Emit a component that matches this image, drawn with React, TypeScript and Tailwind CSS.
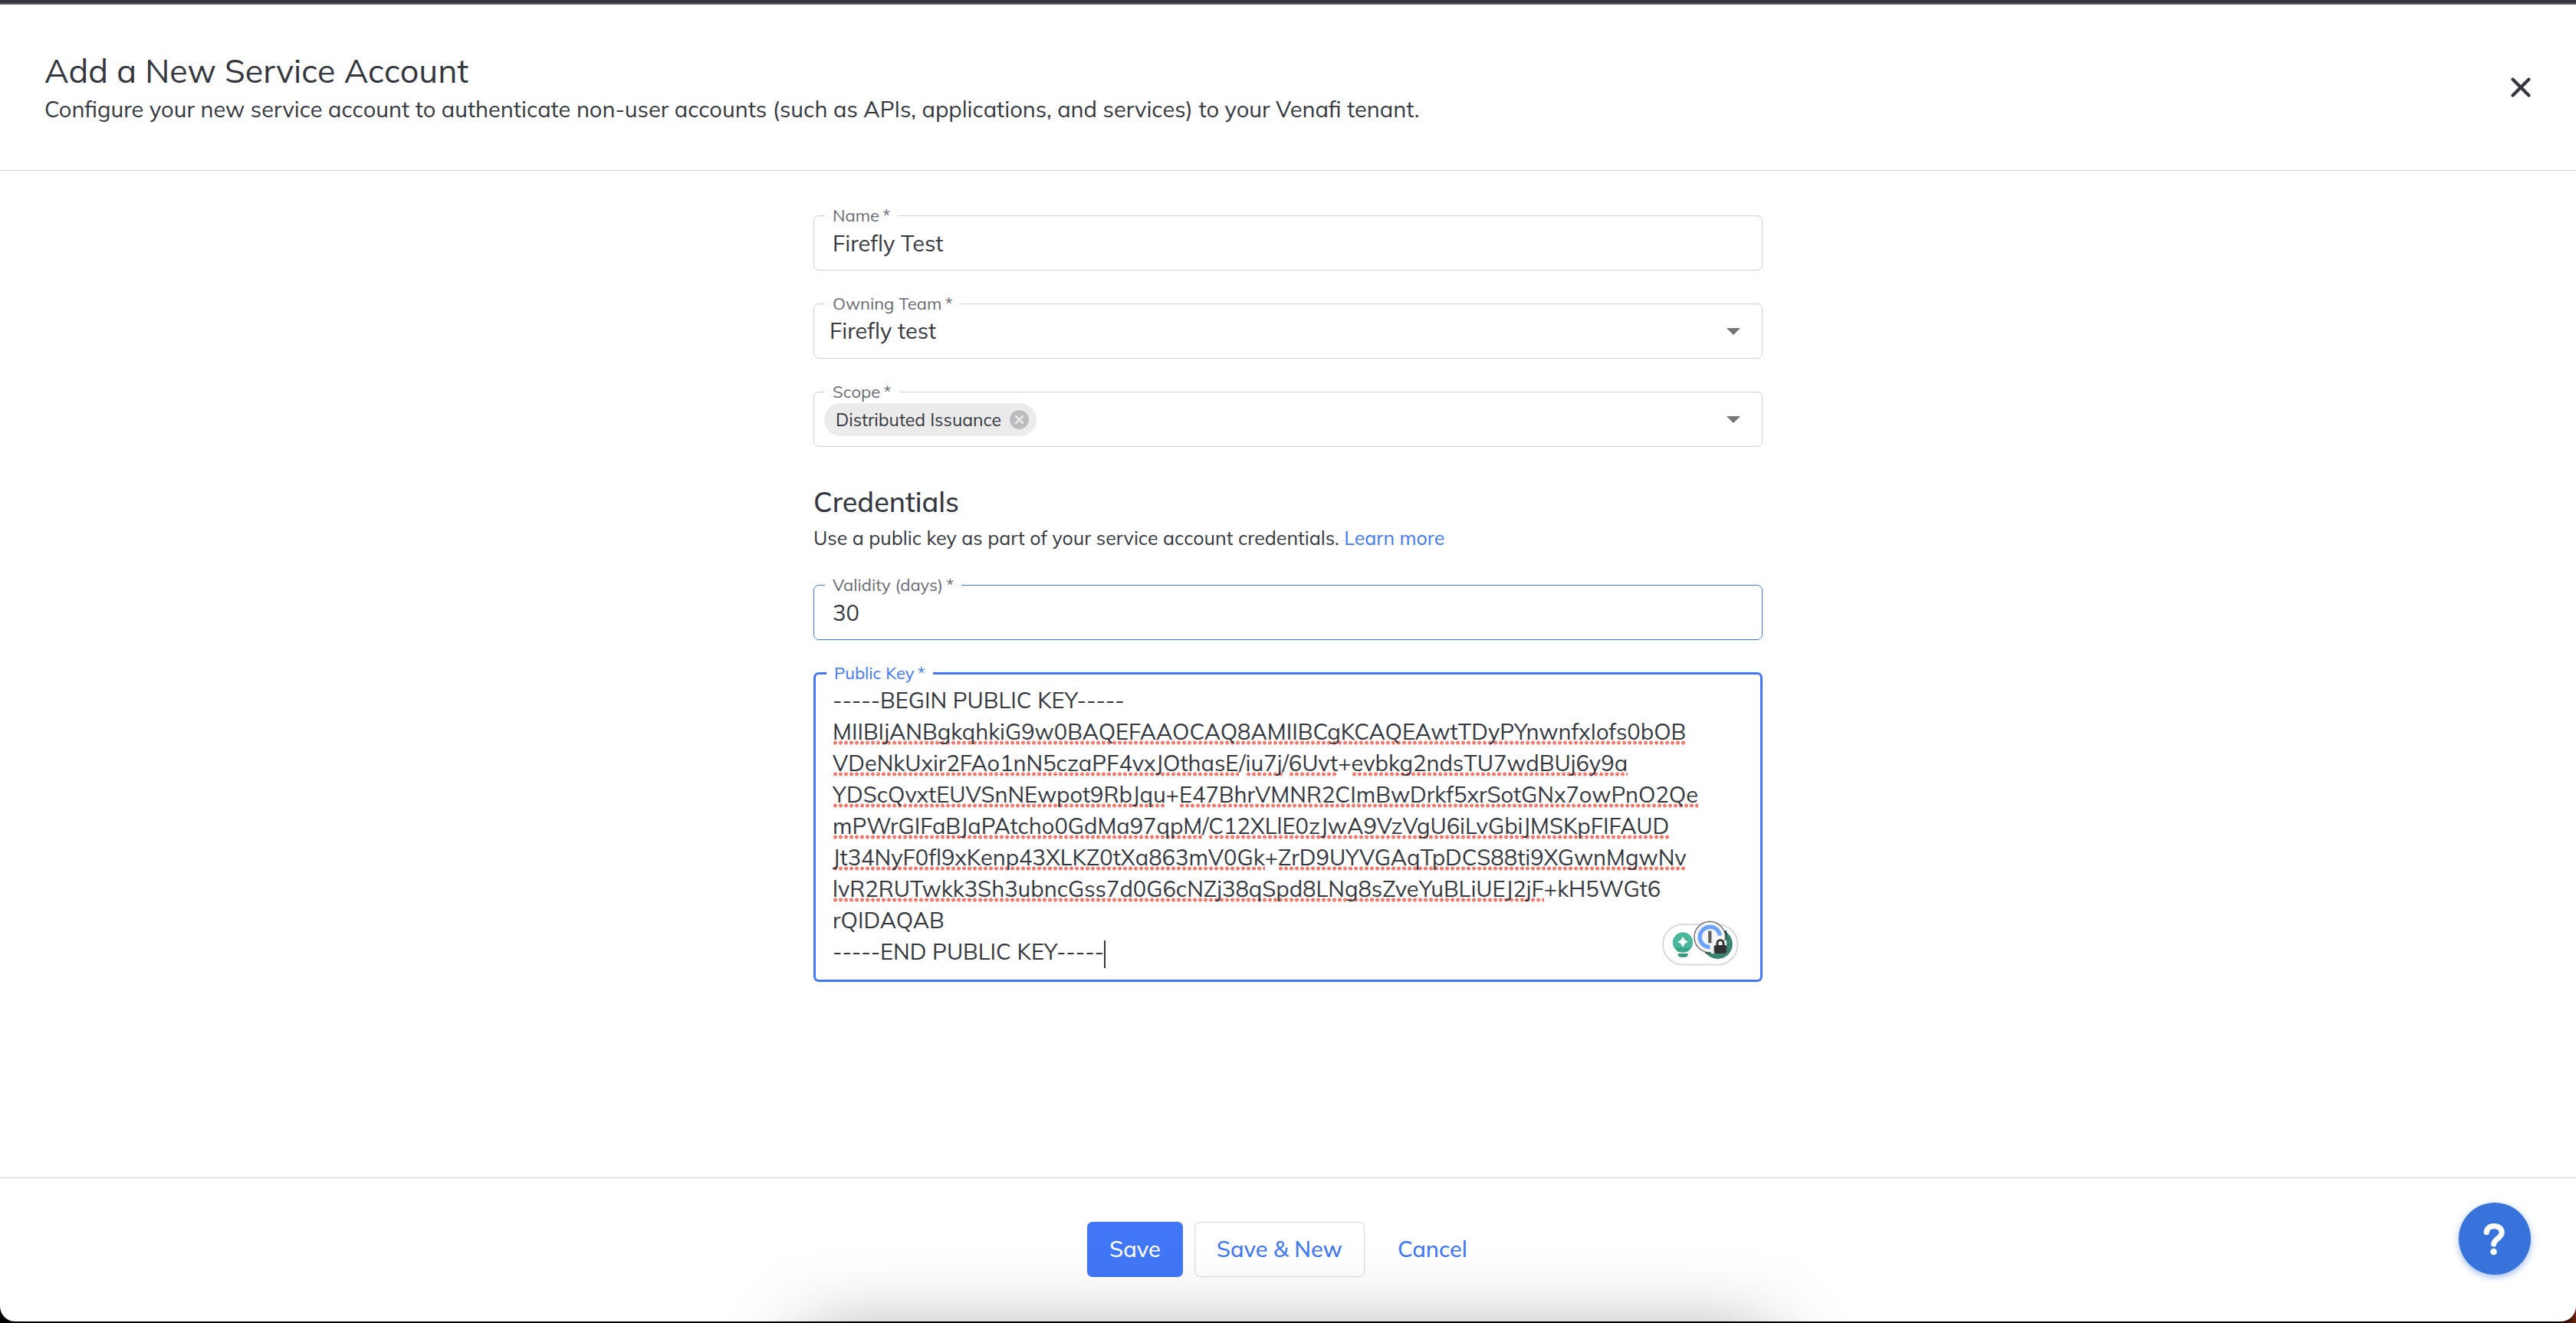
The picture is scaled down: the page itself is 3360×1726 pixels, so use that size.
import React from 'react'

const KEY_LINES = [
  '-----BEGIN PUBLIC KEY-----',
  'MIIBIjANBgkqhkiG9w0BAQEFAAOCAQ8AMIIBCgKCAQEAwtTDyPYnwnfxIofs0bOB',
  'VDeNkUxir2FAo1nN5czaPF4vxJOthasE/iu7j/6Uvt+evbkg2ndsTU7wdBUj6y9a',
  'YDScQvxtEUVSnNEwpot9RbJqu+E47BhrVMNR2CImBwDrkf5xrSotGNx7owPnO2Qe',
  'mPWrGIFaBJaPAtcho0GdMa97qpM/C12XLlE0zJwA9VzVgU6iLvGbiJMSKpFIFAUD',
  'Jt34NyF0fl9xKenp43XLKZ0tXa863mV0Gk+ZrD9UYVGAqTpDCS88ti9XGwnMgwNv',
  'lvR2RUTwkk3Sh3ubncGss7d0G6cNZj38qSpd8LNg8sZveYuBLiUEJ2jF+kH5WGt6',
  'rQIDAQAB',
  '-----END PUBLIC KEY-----',
]

const KNOWN_WORDS = new Set(['kH5WGt6', 'rQIDAQAB'])

function isFlagged(part: string) {
  return /^[A-Za-z0-9]+$/.test(part) && !KNOWN_WORDS.has(part)
}

type Tone = 'idle' | 'hover' | 'focus'

const FRAME: Record<Tone, string> = {
  idle: 'border border-[#d2d2d5]',
  hover: 'border border-[#4177f6]',
  focus: 'border-[3px] border-[#4177f6]',
}

function Field({
  id,
  label,
  tone = 'idle',
  children,
}: {
  id: string
  label: string
  tone?: Tone
  children: React.ReactNode
}) {
  return (
    <fieldset className={`relative min-w-0 rounded-[7px] ${FRAME[tone]}`}>
      <legend
        className={`ml-[14px] h-[25px] px-[10px] text-[22px] leading-[24px] ${
          tone === 'focus' ? 'text-[#4177f6]' : 'text-[#696b74]'
        }`}
      >
        <label htmlFor={id} className="block">
          {label}&thinsp;*
        </label>
      </legend>
      {children}
    </fieldset>
  )
}

function Arrow() {
  return (
    <svg
      viewBox="0 0 18 9"
      className="pointer-events-none absolute right-[28px] top-[19px] h-[9px] w-[18px]"
      aria-hidden="true"
    >
      <path d="M0 0h18l-9 9z" fill="#757575" />
    </svg>
  )
}

function WritingBadge() {
  return (
    <svg
      viewBox="0 0 100 60"
      className="absolute bottom-[18px] right-[28px] h-[60px] w-[100px]"
      aria-hidden="true"
    >
      <rect x="1" y="6" width="97.5" height="52.5" rx="26.2" fill="#fff" stroke="#d0d0de" strokeWidth="1.6" />
      <circle cx="27" cy="29.5" r="13.2" fill="#48b79b" />
      <path d="M17 36h20l-3.2 5.4H20.200z" fill="#3ba58a" />
      <path d="M20.500 44h13.400c0 3-1.600 4.800-3.600 4.800h-6.200c-2 0-3.600-1.800-3.600-4.800z" fill="#3b9680" />
      <path d="M27 21.500q1.700 6 7.400 7.300-5.700 1.500-7.400 7.200-1.700-5.700-7.400-7.200 5.700-1.300 7.400-7.300z" fill="#fff" />
      <circle cx="72.500" cy="31.700" r="19.300" fill="#3a8474" />
      <path d="M56 41v3h12v-3zM80 14h4v11h-4z" fill="#17352e" />
      <circle cx="62.200" cy="22.500" r="20.300" fill="#f6f6f7" stroke="#6f6f6f" strokeWidth="1.400" />
      <path d="M66 27h18v17H63.500z" fill="#f1f1f2" />
      <path d="M62.500 35.800A13.300 13.300 0 1 1 75.600 20.500" fill="none" stroke="#6ba3fb" strokeWidth="5.300" />
      <path d="M62.300 14.500v15.800" stroke="#5d5d5d" strokeWidth="4.300" />
      <path d="M72 34v-3.600a4 4 0 0 1 8 0V34" fill="none" stroke="#333" strokeWidth="2.800" />
      <rect x="67.700" y="33" width="16.400" height="11" rx="2" fill="#333" />
    </svg>
  )
}

export default function App() {
  return (
    <div className="flex min-h-screen flex-col bg-linear-to-r from-black from-99% to-[#6b2113] pb-[2px] font-['Mulish','Open_Sans',sans-serif] text-[#35373f]">
      <div className="relative flex flex-1 flex-col overflow-hidden rounded-b-[20px] bg-white">
        <div className="h-[6px] border-b-2 border-[#606166] bg-[#35363b]" />

        <header className="flex items-center justify-between border-b border-[#d2d2d3] px-[58px] py-[58px]">
          <div>
            <h1 className="text-[43px] leading-[56px]">Add a New Service Account</h1>
            <p className="text-[29px] leading-[44px]">
              Configure your new service account to authenticate non-user accounts (such as APIs, applications, and
              services) to your Venafi tenant.
            </p>
          </div>
          <button type="button" aria-label="Close" className="p-0">
            <svg viewBox="0 0 28 28" className="h-[28px] w-[28px]" aria-hidden="true">
              <path d="M3.500 3.500l21 21M24.500 3.500l-21 21" stroke="#35373f" strokeWidth="4.200" strokeLinecap="round" />
            </svg>
          </button>
        </header>

        <form
          id="service-account"
          onSubmit={(e) => e.preventDefault()}
          className="mx-auto flex w-full max-w-[1238px] flex-1 flex-col gap-[31px] pt-[46px]"
        >
          <Field id="name" label="Name">
            <input
              id="name"
              type="text"
              defaultValue="Firefly Test"
              className="block h-[58px] w-full bg-transparent px-[24px] pb-[12px] text-[29px] outline-none"
            />
          </Field>

          <Field id="team" label="Owning Team">
            <div className="relative">
              <select
                id="team"
                defaultValue="firefly"
                className="block h-[58px] w-full appearance-none bg-transparent px-[20px] pb-[12px] text-[29px] outline-none"
              >
                <option value="firefly">Firefly test</option>
              </select>
              <Arrow />
            </div>
          </Field>

          <Field id="scope" label="Scope">
            <div className="relative flex h-[58px] items-center pb-[12px] pl-[13px]">
              <span className="flex h-[43px] items-center gap-[11px] rounded-full bg-[#ebebeb] pl-[15px] pr-[10px] text-[23px] leading-[43px]">
                Distributed Issuance
                <button type="button" aria-label="Remove Distributed Issuance" className="p-0">
                  <svg viewBox="0 0 24 24" className="block h-[25px] w-[25px]" aria-hidden="true">
                    <circle cx="12" cy="12" r="12" fill="#bbbcbd" />
                    <path d="M7 7l10 10M17 7L7 17" stroke="#ebebeb" strokeWidth="2.400" />
                  </svg>
                </button>
              </span>
              <select id="scope" defaultValue="" className="h-[43px] flex-1 appearance-none bg-transparent outline-none">
                <option value="" />
              </select>
              <Arrow />
            </div>
          </Field>

          <section className="flex flex-col pt-[18px]">
            <h2 className="text-[36px] font-medium leading-[46px]">Credentials</h2>
            <p className="pt-[6px] text-[25px] leading-[36px]">
              Use a public key as part of your service account credentials.{' '}
              <a href="#learn-more" className="text-[#4177f6]">
                Learn more
              </a>
            </p>
          </section>

          <Field id="validity" label="Validity (days)" tone="hover">
            <input
              id="validity"
              type="text"
              inputMode="numeric"
              defaultValue="30"
              className="block h-[58px] w-full bg-transparent px-[24px] pb-[12px] text-[29px] outline-none"
            />
          </Field>

          <Field id="public-key" label="Public Key" tone="focus">
            <div className="grid px-[22px] pb-[16px] pt-[2px] text-[29px] leading-[41px]">
              {/* Spelling marks and caret, laid out behind the text box */}
              <div aria-hidden="true" className="col-start-1 row-start-1 whitespace-pre text-transparent select-none">
                {KEY_LINES.map((line, i) => (
                  <div key={i} className="h-[41px]">
                    {line.split(/([/+]|-+| )/).map((part, j) =>
                      isFlagged(part) && line[0] !== '-' ? (
                        <span
                          key={j}
                          className="bg-[radial-gradient(circle,#f27b70_2px,transparent_3px)] bg-[length:7px_6px] bg-[position:0_30px] bg-repeat-x"
                        >
                          {part}
                        </span>
                      ) : (
                        <span key={j}>{part}</span>
                      ),
                    )}
                    {i === KEY_LINES.length - 1 && (
                      <span className="inline-block h-[36px] w-[2px] bg-[#35373f] align-middle" />
                    )}
                  </div>
                ))}
              </div>
              <textarea
                id="public-key"
                rows={9}
                spellCheck={false}
                defaultValue={KEY_LINES.join('\n')}
                className="col-start-1 row-start-1 block h-[369px] w-full resize-none overflow-hidden bg-transparent leading-[41px] outline-none"
              />
            </div>
            <WritingBadge />
          </Field>
        </form>

        <footer className="flex justify-center gap-[15px] border-t border-[#d0d0d6] pb-[58px] pt-[57px] text-[29px] font-medium text-[#4177f6]">
          <button type="submit" form="service-account" className="h-[72px] rounded-[7px] bg-[#4177f6] px-[29px] text-white">
            Save
          </button>
          <button type="button" className="h-[72px] rounded-[7px] border border-[#d4d4d4] px-[28px]">
            Save &amp; New
          </button>
          <button type="button" className="h-[72px] px-[28px]">
            Cancel
          </button>
        </footer>

        {/* Soft shade rising from the bottom edge of the window */}
        <div className="pointer-events-none absolute inset-x-0 top-full mx-auto mt-[14px] h-[120px] max-w-[1260px] shadow-[0_0_100px_rgba(0,0,0,0.34)]" />
      </div>

      <button
        type="button"
        aria-label="Help"
        className="fixed bottom-[63px] right-[59px] h-[94px] w-[94px] rounded-full bg-[#3873db] shadow-[0_3px_8px_rgba(56,115,219,0.5)]"
      >
        <svg viewBox="0 0 94 94" className="h-full w-full" aria-hidden="true">
          <path
            d="M36.200 38.600C36.600 33.500 40.400 30.600 46 30.600c6 0 10.200 3.200 10.200 8.400 0 6.500-9.800 8.500-10.600 15"
            fill="none"
            stroke="#fff"
            strokeWidth="7.200"
            strokeLinecap="round"
            strokeLinejoin="round"
          />
          <circle cx="45.600" cy="64" r="4.300" fill="#fff" />
        </svg>
      </button>
    </div>
  )
}
